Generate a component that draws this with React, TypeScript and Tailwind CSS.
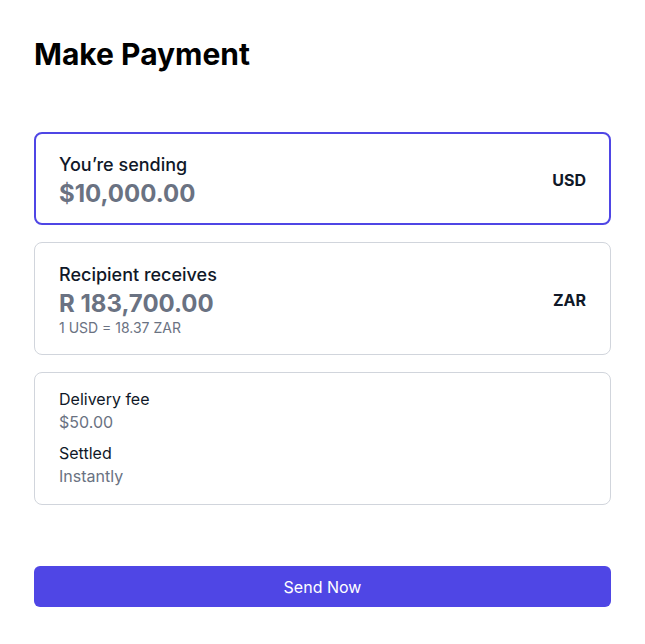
import { type FC } from 'react'

const App: FC = () => {
  return (
    <div className="min-h-screen bg-white px-[34px] pt-[36px] font-['Inter',sans-serif] text-gray-900">
      <h1 className="text-3xl font-bold leading-9 text-black">Make Payment</h1>

      <div className="mt-[60px] flex flex-col gap-[17px]">
        {/* sending */}
        <div className="flex items-center justify-between rounded-lg border-2 border-[#4f46e5] pl-[23px] pr-[23px] pt-[17px] pb-[15px]">
          <div>
            <p className="text-lg font-medium leading-7">You’re sending</p>
            <p className="text-2xl font-bold leading-[29px] text-gray-500">$10,000.00</p>
          </div>
          <span className="text-base font-bold">USD</span>
        </div>

        {/* receiving */}
        <div className="flex items-center justify-between rounded-lg border border-gray-300 px-6 pt-[18px] pb-[16px]">
          <div>
            <p className="text-lg font-medium leading-7">Recipient receives</p>
            <p className="text-2xl font-bold leading-[29px] text-gray-500">R 183,700.00</p>
            <p className="text-sm leading-5 text-gray-500">1 USD = 18.37 ZAR</p>
          </div>
          <span className="text-base font-bold">ZAR</span>
        </div>

        {/* details */}
        <div className="rounded-lg border border-gray-300 px-6 pt-[15px] pb-[16px]">
          <p className="text-base leading-[23px]">Delivery fee</p>
          <p className="text-base leading-[23px] text-gray-500">$50.00</p>
          <p className="mt-2 text-base leading-[23px]">Settled</p>
          <p className="text-base leading-[23px] text-gray-500">Instantly</p>
        </div>
      </div>

      <button className="mt-[61px] h-[41px] w-full rounded-md bg-[#4f46e5] text-base text-white">
        Send Now
      </button>
    </div>
  )
}

export default App
